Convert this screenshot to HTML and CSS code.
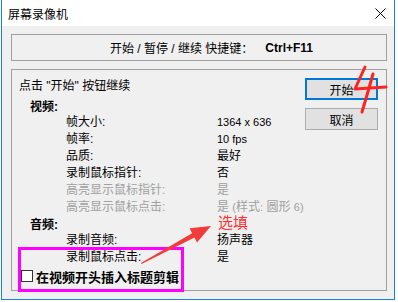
FILE: index.html
```html
<!DOCTYPE html>
<html lang="zh-CN">
<head>
    <meta charset="UTF-8">
    <meta name="viewport" content="width=device-width, initial-scale=1.0">
    <title>屏幕录像机</title>
    <link rel="stylesheet" href="styles.css">
</head>
<body>
    <div class="window">
        <div class="titlebar">
            <span class="title">屏幕录像机</span>
            <svg class="close" width="11" height="11" viewBox="0 0 11 11">
                <path d="M0.5 0.5 L10.5 10.5 M10.5 0.5 L0.5 10.5" stroke="#000" stroke-width="1" fill="none"/>
            </svg>
        </div>

        <div class="client">
            <div class="hotkey-box">
                <span>开始 / 暂停 / 继续 快捷键：</span>
                <b class="key">Ctrl+F11</b>
            </div>

            <div class="main-box">
                <div class="info">
                    <p class="prompt">点击 "开始" 按钮继续</p>

                    <div class="section-title">视频:</div>
                    <div class="rows">
                        <span>帧大小:</span><span class="latin">1364 x 636</span>
                        <span>帧率:</span><span class="latin">10 fps</span>
                        <span>品质:</span><span>最好</span>
                        <span>录制鼠标指针:</span><span>否</span>
                        <span class="muted">高亮显示鼠标指针:</span><span class="muted">是</span>
                        <span class="muted">高亮显示鼠标点击:</span><span class="muted">是 <span class="latin">(</span>样式<span class="latin">:</span> 圆形 <span class="latin">6)</span></span>
                    </div>

                    <div class="section-title audio">音频:</div>
                    <div class="rows">
                        <span>录制音频:</span><span>扬声器</span>
                        <span>录制鼠标点击:</span><span>是</span>
                    </div>

                    <label class="check-row">
                        <span class="checkbox"></span>
                        <span class="check-text">在视频开头插入标题剪辑</span>
                    </label>
                </div>

                <div class="buttons">
                    <button class="btn primary">开始</button>
                    <button class="btn">取消</button>
                </div>
            </div>
        </div>
    </div>

    <!-- hand-drawn markup on top of the screenshot -->
    <svg class="annotations" width="398" height="302" viewBox="0 0 398 302">
        <rect x="19.5" y="248.5" width="163" height="42" fill="none" stroke="#ff00ff" stroke-width="3"/>
        <polygon points="141,263 192.1,233.2 189.6,228.3 211,226 197,242.5 194.5,237.6 141.6,264" fill="#f23b3b"/>
        <path d="M365 67 L355 89 L370 88 L386 87" stroke="#ff2222" stroke-width="3" fill="none" stroke-linecap="round" stroke-linejoin="round"/>
        <path d="M373 74 L367 95 L362 112" stroke="#ff2222" stroke-width="3" fill="none" stroke-linecap="round"/>
    </svg>
    <span class="note">选填</span>
</body>
</html>
```

FILE: styles.css
```css
body {
    margin: 0;
    width: 398px;
    height: 302px;
    background-color: #fff;
    font-family: "Liberation Sans", "Noto Sans CJK SC", sans-serif;
    font-size: 12px;
    color: #000;
    position: relative;
    overflow: hidden;
}

.window {
    margin-left: 1px;
    width: 394px;
    height: 300px;
    box-sizing: border-box;
    border: 1px solid #1883d7;
    border-top: none;
    background-color: #f0f0f0;
    display: flex;
    flex-direction: column;
}

.titlebar {
    height: 26px;
    background-color: #fff;
    display: flex;
    justify-content: space-between;
    align-items: center;
    padding: 0 8px 0 6px;
}

.title {
    font-size: 12px;
}

.close {
    display: block;
}

.client {
    flex: 1;
    padding: 8px 7px 0 9px;
}

.hotkey-box {
    height: 27px;
    box-sizing: border-box;
    border: 1px solid #a0a0a0;
    display: flex;
    align-items: center;
    padding-left: 98px;
}

.key {
    margin-left: 12px;
    font-weight: bold;
}

.main-box {
    margin-top: 8px;
    height: 222px;
    box-sizing: border-box;
    border: 1px solid #a0a0a0;
    padding: 8px 8px 0 7px;
    display: flex;
}

.info {
    flex: 1;
    min-width: 0;
    white-space: nowrap;
}

.prompt {
    margin: 0;
    line-height: 17px;
}

.section-title {
    margin-top: 5px;
    padding-left: 11px;
    line-height: 14px;
    height: 14px;
    font-weight: bold;
}

.section-title.audio {
    margin-top: 2px;
}

.rows {
    display: grid;
    grid-template-columns: 151px auto;
    grid-auto-rows: 17px;
    align-items: center;
    padding-left: 47px;
    line-height: 17px;
}

.latin {
    font-size: 11px;
}

.muted {
    color: #a0a0a0;
}

.check-row {
    height: 20px;
    display: flex;
    align-items: center;
    padding-left: 2px;
}

.checkbox {
    width: 12px;
    height: 12px;
    box-sizing: border-box;
    border: 1px solid #333;
    background-color: #fff;
    margin-right: 3px;
}

.check-text {
    font-size: 13px;
    font-weight: bold;
}

.buttons {
    display: flex;
    flex-direction: column;
    gap: 8px;
}

.btn {
    width: 73px;
    height: 22px;
    box-sizing: border-box;
    background-color: #e1e1e1;
    border: 1px solid #adadad;
    font-family: inherit;
    font-size: 12px;
    color: #000;
    padding: 0;
}

.btn.primary {
    border: 2px solid #0078d7;
}

.annotations {
    position: absolute;
    top: 0;
    left: 0;
    pointer-events: none;
}

.note {
    position: absolute;
    left: 218px;
    top: 214px;
    font-size: 15px;
    line-height: 17px;
    color: #ff3030;
}
```
